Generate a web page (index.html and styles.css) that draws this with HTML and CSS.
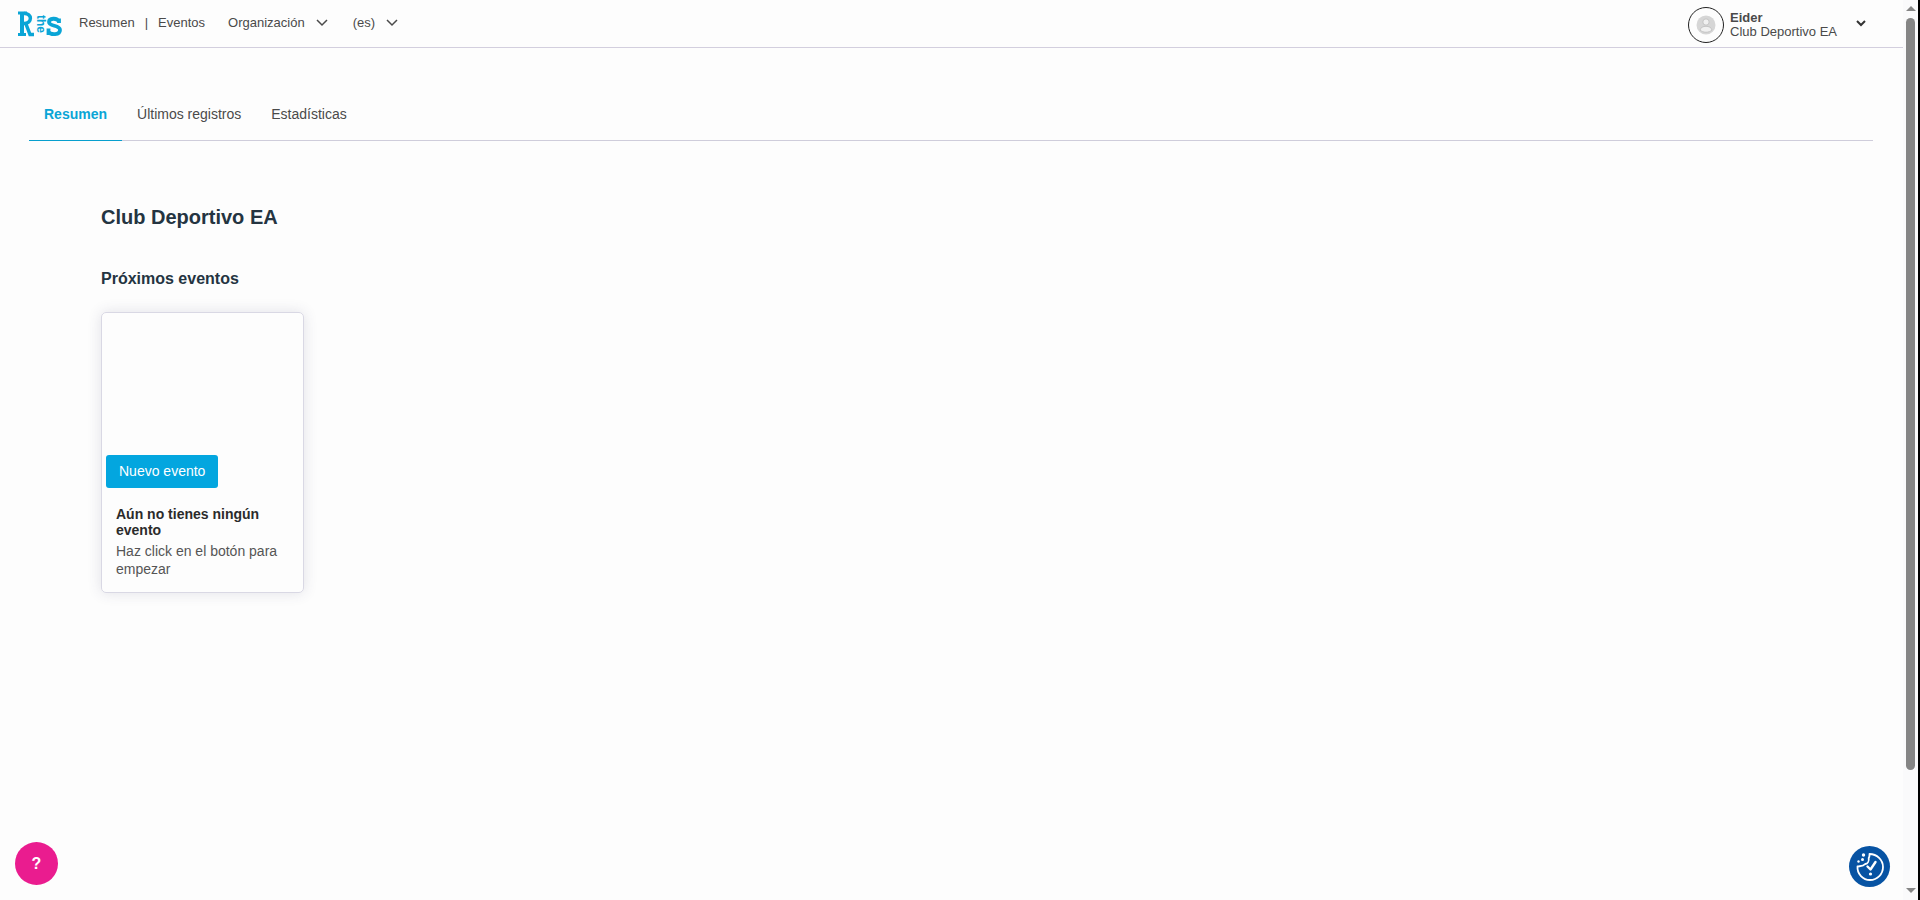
FILE: index.html
```
<!DOCTYPE html>
<html lang="es">
<head>
<meta charset="utf-8">
<meta name="viewport" content="width=device-width, initial-scale=1">
<title>Resumen</title>
<link rel="stylesheet" href="styles.css">
</head>
<body>
<div class="page">
  <header class="topbar">
    <a class="logo" href="#" aria-label="Inicio">
      <svg viewBox="0 0 44 26" width="44" height="26" fill="none" stroke="#0aa5d6">
        <path d="M0 2h9M0 23.500h8" stroke-width="3"/>
        <path d="M4 24V2" stroke-width="4"/>
        <path d="M6 2.500c8.500-.5 8.500 10 0 10h-1M8 13l4 10.500h4" stroke-width="3.500"/>
        <text class="logo-the" x="4" y="-19" transform="rotate(90)">the</text>
        <path d="M41 12V7.500M41 10.500c-2-4-10-3.500-10 .5 0 5 11 2.500 11 8 0 5-9 5.500-12 1.500M30.500 17.500V24" stroke-width="3.800"/>
      </svg>
    </a>
    <nav class="nav">
      <a href="#">Resumen</a>
      <span class="divider">|</span>
      <a href="#">Eventos</a>
      <button class="menu menu-org" type="button">Organización
        <svg class="chevron" viewBox="0 0 12 8" width="12" height="8"><path d="M1 1l5 5 5-5"/></svg>
      </button>
      <button class="menu menu-lang" type="button">(es)
        <svg class="chevron" viewBox="0 0 12 8" width="12" height="8"><path d="M1 1l5 5 5-5"/></svg>
      </button>
    </nav>
    <button class="account" type="button">
      <span class="avatar">
        <svg viewBox="0 0 20 20" width="20" height="20"><circle cx="10" cy="10" r="9.500" fill="#d6d6d6"/><circle cx="10" cy="7" r="3.200" fill="#f0f0f0" stroke="#c4c4c4"/><path d="M4 15c1-5 11-5 12 0-3 3-9 3-12 0z" fill="#f0f0f0" stroke="#c4c4c4"/></svg>
      </span>
      <span class="who"><strong>Eider</strong><span>Club Deportivo EA</span></span>
      <svg class="caret" viewBox="0 0 10 7" width="10" height="7"><path d="M1 1l4 4 4-4"/></svg>
    </button>
  </header>

  <main class="main">
    <nav class="tabs">
      <a class="tab active" href="#">Resumen</a>
      <a class="tab" href="#">Últimos registros</a>
      <a class="tab" href="#">Estadísticas</a>
    </nav>
    <section class="content">
      <h1>Club Deportivo EA</h1>
      <h2>Próximos eventos</h2>
      <article class="card">
        <div class="cover"><button class="primary" type="button">Nuevo evento</button></div>
        <div class="card-text">
          <h3>Aún no tienes ningún evento</h3>
          <p>Haz click en el botón para empezar</p>
        </div>
      </article>
    </section>
  </main>
</div>

<div class="scrollbar" aria-hidden="true">
  <svg viewBox="0 0 10 6" width="10" height="6"><path d="M0 5l5-5 5 5z"/></svg>
  <div class="track"><div class="thumb"></div></div>
  <svg viewBox="0 0 10 6" width="10" height="6"><path d="M0 0l5 5 5-5z"/></svg>
</div>

<button class="help" type="button" aria-label="Ayuda">?</button>
<button class="cookies" type="button" aria-label="Preferencias de cookies">
  <svg viewBox="0 0 42 42" width="42" height="42" fill="none" stroke="#fff" stroke-width="1.800" stroke-linejoin="round" stroke-linecap="round">
    <path d="M20.500 8c0 1.500.3 2.500-.8 4 .5 3-1 5.500-3.500 6-2 2.500-5 2-7.700 2.500C8 28 14 34 21 34c7.500 0 13-6 13-13S28 8 20.500 8z"/>
    <path d="M18.500 20.500l3 3 5-7.500" stroke-width="2.400"/>
    <g fill="#fff" stroke="none"><circle cx="14.500" cy="9" r="1.700"/><circle cx="13.500" cy="13.500" r="1.500"/><circle cx="9.500" cy="15.500" r="1.200"/><circle cx="21.500" cy="28" r="1.600"/></g>
  </svg>
</button>
</body>
</html>
```
FILE: styles.css
```
* { box-sizing: border-box; }

body {
  margin: 0;
  background: #fdfdfd;
  color: #4a4a4a;
  font-family: "Liberation Sans", Arial, sans-serif;
  font-size: 14px;
}

a { color: inherit; text-decoration: none; }

button {
  padding: 0;
  border: 0;
  background: none;
  color: inherit;
  font: inherit;
  cursor: pointer;
}

.page { margin-right: 17px; }

.topbar {
  display: flex;
  align-items: center;
  height: 48px;
  padding: 0 32px 0 18px;
  border-bottom: 1px solid #d3cfde;
  font-size: 13px;
}

.logo { display: flex; margin-right: 17px; }

.logo-the {
  fill: #0aa5d6;
  stroke: none;
  font-size: 12px;
  font-weight: bold;
}

.nav { display: flex; align-items: center; padding-bottom: 2px; }

.divider { margin: 0 10px; }

.menu { display: flex; align-items: center; gap: 11px; }
.menu-org { margin-left: 23px; }
.menu-lang { margin-left: 25px; }

.chevron, .caret { fill: none; stroke: #4a4a4a; stroke-width: 1.500; }
.caret { margin-left: 19px; stroke: #333; stroke-width: 2; }

.account {
  display: flex;
  align-items: center;
  margin-left: auto;
  padding-right: 5px;
  text-align: left;
}

.avatar {
  display: grid;
  place-items: center;
  width: 36px;
  height: 36px;
  margin: 2px 6px 0 0;
  border: 1px solid #222;
  border-radius: 50%;
}

.who { display: flex; flex-direction: column; padding-top: 2px; line-height: 14px; }

.main { padding: 40px 30px 0 29px; }

.tabs { display: flex; border-bottom: 1px solid #cfcddb; }

.tab {
  margin-bottom: -1px;
  padding: 16px 15px;
  border-bottom: 1px solid transparent;
  line-height: 20px;
}

.tab.active {
  border-color: #079fce;
  color: #0aa5d6;
  font-weight: bold;
}

.content { padding: 64px 72px; color: #243441; }

h1, h2, h3, p { margin: 0; }

h1 { font-size: 20px; line-height: 24px; }

h2 { margin-top: 40px; font-size: 16px; line-height: 20px; }

.card {
  width: 203px;
  margin-top: 23px;
  border: 1px solid #d9d8e4;
  border-radius: 5px;
  box-shadow: 0 0 14px rgba(60, 60, 100, 0.15);
}

.cover {
  display: flex;
  align-items: flex-end;
  height: 175px;
  padding: 0 4px;
}

.primary {
  height: 33px;
  padding: 0 13px 2px;
  border-radius: 3px;
  background: #03a6df;
  color: #fff;
}

.card-text { padding: 18px 14px 14px; color: #555; }

h3 { color: #2b2b2b; font-size: 14px; line-height: 16px; }

.card-text p { margin-top: 4px; line-height: 18px; }

.scrollbar {
  position: fixed;
  top: 0;
  right: 0;
  bottom: 0;
  display: flex;
  flex-direction: column;
  align-items: center;
  width: 17px;
  padding: 6px 0;
  border-right: 2px solid #000;
  background: #fafafb;
  fill: #858585;
}

.track { flex: 1; padding: 6px 0; }

.thumb {
  width: 9px;
  height: 87%;
  border-radius: 5px;
  background: #858585;
}

.help, .cookies {
  position: fixed;
  display: grid;
  place-items: center;
  border-radius: 50%;
  color: #fff;
}

.help {
  bottom: 15px;
  left: 15px;
  width: 43px;
  height: 43px;
  background: #ea1c8f;
  font-size: 16px;
  font-weight: bold;
}

.cookies {
  right: 30px;
  bottom: 13px;
  width: 41px;
  height: 41px;
  background: #0753a3;
}
```
